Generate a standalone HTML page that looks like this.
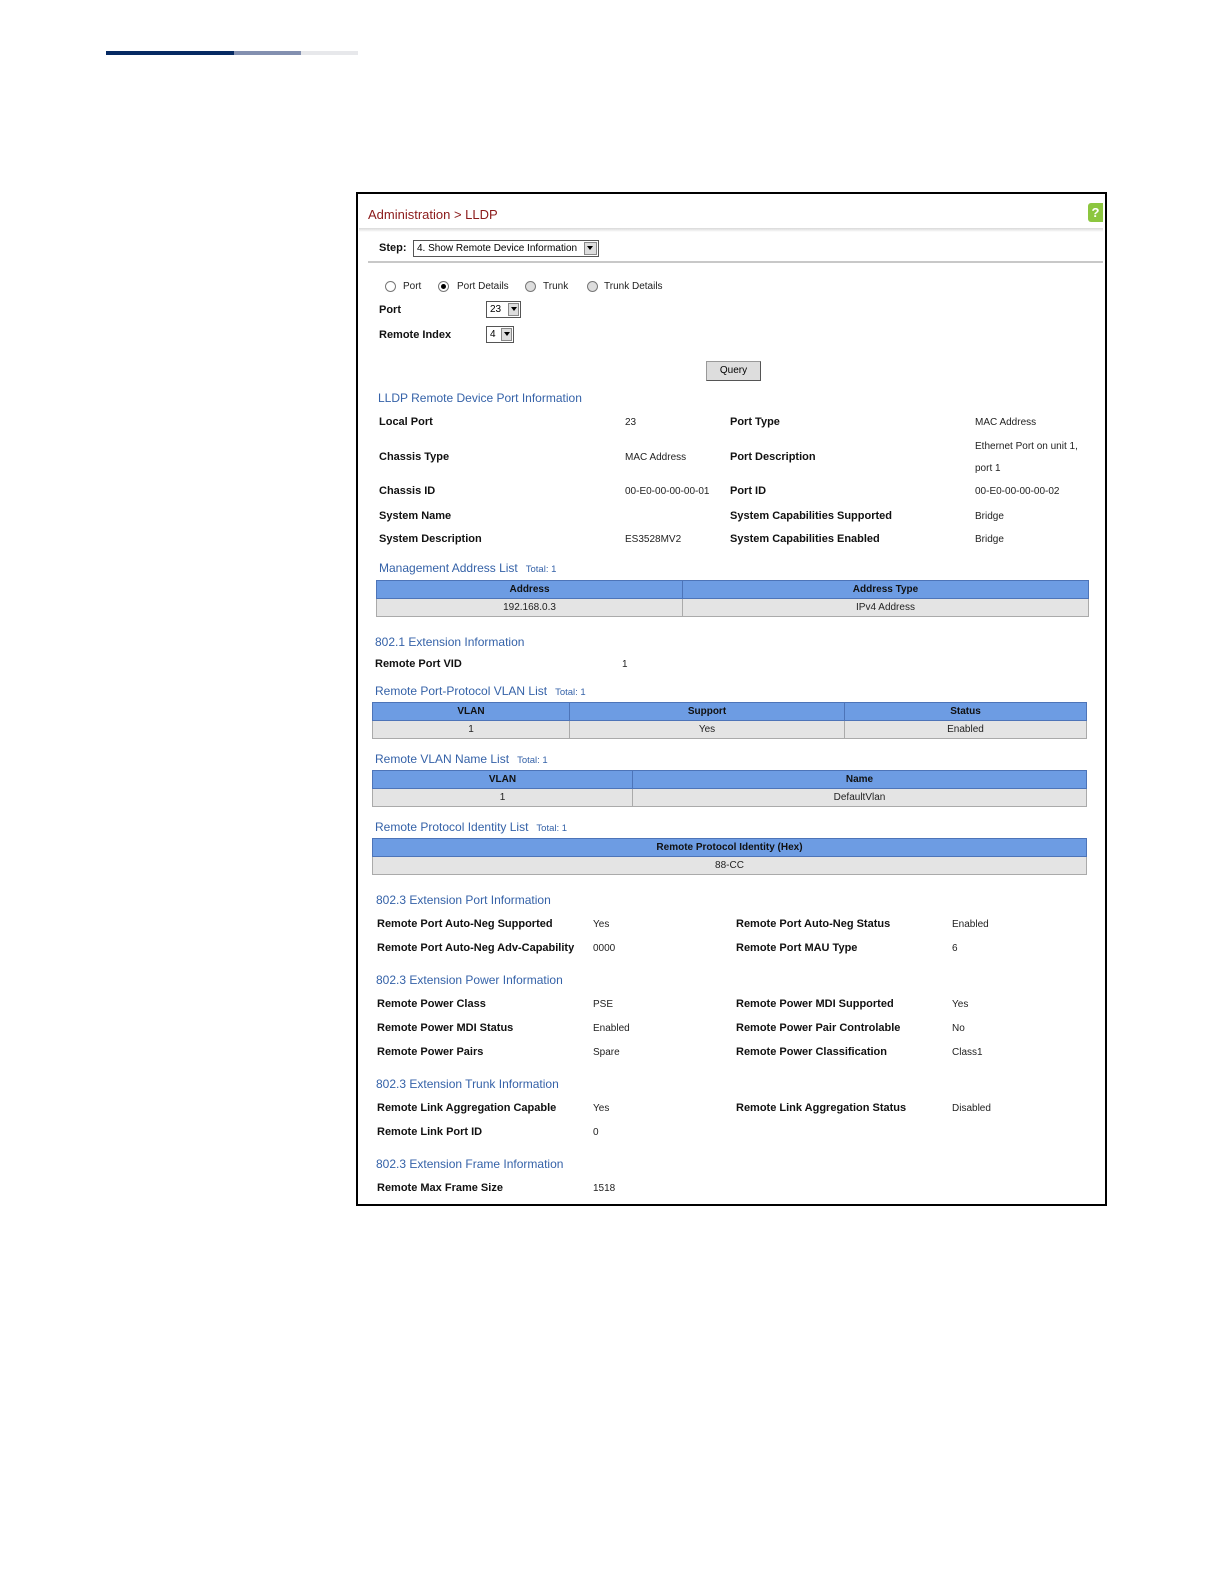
<!DOCTYPE html>
<html><head><meta charset="utf-8"><style>
body{margin:0;width:1224px;height:1584px;background:#fff;position:relative;font-family:"Liberation Sans",sans-serif;overflow:hidden}
div{position:absolute}
.t{font-size:11px;line-height:14px;white-space:nowrap;color:#111}
.b{font-weight:bold}
.v{font-size:10px;color:#222;padding-top:1px}
.h{font-size:12px;color:#3562a8;font-weight:normal;white-space:nowrap;line-height:14px}
.h small{font-size:9.5px;margin-left:8px}
table{position:absolute;border-collapse:collapse;font-size:10px}
th{background:#6d9ce3;border:1px solid #4d74b8;color:#111;font-weight:bold;height:17px;padding:0}
td{background:#e4e4e4;border:1px solid #aaa;text-align:center;height:17px;padding:0;color:#222}
.sel{border:1px solid #555;background:#fff;height:15px;font-size:10px;line-height:15px;padding-left:3px;box-sizing:border-box}
.arr{position:absolute;right:1px;top:1px;width:11px;height:11px;background:#ddd;border:1px solid #888;box-sizing:border-box}
.arr:after{content:"";position:absolute;left:2px;top:3px;border-left:3px solid transparent;border-right:3px solid transparent;border-top:4px solid #000}
.rad{width:9px;height:9px;border:1px solid #777;border-radius:50%;background:#fff}
</style></head><body>
<div style="left:106px;top:51px;width:128px;height:4px;background:#062a63"></div>
<div style="left:234px;top:51px;width:67px;height:4px;background:#8390b0"></div>
<div style="left:301px;top:51px;width:57px;height:4px;background:#e7e8eb"></div>

<div style="left:356px;top:192px;width:747px;height:1010px;border:2px solid #000;background:#fff"></div>
<div style="left:359px;top:228px;width:744px;height:4px;background:linear-gradient(#d8d8d8,#fff)"></div>
<div style="left:368px;top:207px;font-size:13px;color:#8b1a1a;line-height:16px">Administration &gt; LLDP</div>
<div style="left:1088px;top:203px;width:15px;height:19px;background:#8cc63f;border-radius:3px 0 0 3px;color:#fff;font-weight:bold;font-size:13px;text-align:center;line-height:19px">?</div>
<div class="t b" style="left:379px;top:241px">Step:</div>
<div class="sel" style="left:413px;top:240px;width:186px;height:17px;line-height:15px">4. Show Remote Device Information<span class="arr" style="width:13px;height:13px"></span></div>
<div style="left:368px;top:261px;width:735px;height:2px;background:#c8c8c8"></div>

<div class="rad" style="left:385px;top:281px"></div><div class="t v" style="left:403px;top:279px">Port</div>
<div class="rad" style="left:438px;top:281px"><div style="left:2px;top:2px;width:5px;height:5px;border-radius:50%;background:#000"></div></div><div class="t v" style="left:457px;top:279px">Port Details</div>
<div class="rad" style="left:525px;top:281px;background:#ddd"></div><div class="t v" style="left:543px;top:279px">Trunk</div>
<div class="rad" style="left:587px;top:281px;background:#ddd"></div><div class="t v" style="left:604px;top:279px">Trunk Details</div>
<div class="t b" style="left:379px;top:303px">Port</div>
<div class="sel" style="left:486px;top:301px;width:35px;height:17px">23<span class="arr" style="height:13px"></span></div>
<div class="t b" style="left:379px;top:328px">Remote Index</div>
<div class="sel" style="left:486px;top:326px;width:28px;height:17px">4<span class="arr" style="height:13px"></span></div>
<div style="left:706px;top:361px;width:55px;height:20px;background:#ddd;border:1px solid #999;border-right-color:#555;border-bottom-color:#555;box-sizing:border-box;font-size:10px;text-align:center;line-height:18px">Query</div>

<div class="h" style="left:378px;top:391px">LLDP Remote Device Port Information</div>
<div class="t b" style="left:379px;top:415px">Local Port</div><div class="t v" style="left:625px;top:415px">23</div><div class="t b" style="left:730px;top:415px">Port Type</div><div class="t v" style="left:975px;top:415px">MAC Address</div>
<div class="t b" style="left:379px;top:450px">Chassis Type</div><div class="t v" style="left:625px;top:450px">MAC Address</div><div class="t b" style="left:730px;top:450px">Port Description</div><div class="t v" style="left:975px;top:439px">Ethernet Port on unit 1,</div><div class="t v" style="left:975px;top:461px">port 1</div>
<div class="t b" style="left:379px;top:484px">Chassis ID</div><div class="t v" style="left:625px;top:484px">00-E0-00-00-00-01</div><div class="t b" style="left:730px;top:484px">Port ID</div><div class="t v" style="left:975px;top:484px">00-E0-00-00-00-02</div>
<div class="t b" style="left:379px;top:509px">System Name</div><div class="t b" style="left:730px;top:509px">System Capabilities Supported</div><div class="t v" style="left:975px;top:509px">Bridge</div>
<div class="t b" style="left:379px;top:532px">System Description</div><div class="t v" style="left:625px;top:532px">ES3528MV2</div><div class="t b" style="left:730px;top:532px">System Capabilities Enabled</div><div class="t v" style="left:975px;top:532px">Bridge</div>

<div class="h" style="left:379px;top:561px">Management Address List<small>Total: 1</small></div>
<table style="left:376px;top:580px;width:713px"><tr><th style="width:305px">Address</th><th>Address Type</th></tr><tr><td>192.168.0.3</td><td>IPv4 Address</td></tr></table>

<div class="h" style="left:375px;top:635px">802.1 Extension Information</div>
<div class="t b" style="left:375px;top:657px">Remote Port VID</div><div class="t v" style="left:622px;top:657px">1</div>
<div class="h" style="left:375px;top:684px">Remote Port-Protocol VLAN List<small>Total: 1</small></div>
<table style="left:372px;top:702px;width:715px"><tr><th style="width:196px">VLAN</th><th style="width:274px">Support</th><th>Status</th></tr><tr><td>1</td><td>Yes</td><td>Enabled</td></tr></table>
<div class="h" style="left:375px;top:752px">Remote VLAN Name List<small>Total: 1</small></div>
<table style="left:372px;top:770px;width:715px"><tr><th style="width:259px">VLAN</th><th>Name</th></tr><tr><td>1</td><td>DefaultVlan</td></tr></table>
<div class="h" style="left:375px;top:820px">Remote Protocol Identity List<small>Total: 1</small></div>
<table style="left:372px;top:838px;width:715px"><tr><th>Remote Protocol Identity (Hex)</th></tr><tr><td>88-CC</td></tr></table>

<div class="h" style="left:376px;top:893px">802.3 Extension Port Information</div>
<div class="t b" style="left:377px;top:917px">Remote Port Auto-Neg Supported</div><div class="t v" style="left:593px;top:917px">Yes</div><div class="t b" style="left:736px;top:917px">Remote Port Auto-Neg Status</div><div class="t v" style="left:952px;top:917px">Enabled</div>
<div class="t b" style="left:377px;top:941px">Remote Port Auto-Neg Adv-Capability</div><div class="t v" style="left:593px;top:941px">0000</div><div class="t b" style="left:736px;top:941px">Remote Port MAU Type</div><div class="t v" style="left:952px;top:941px">6</div>
<div class="h" style="left:376px;top:973px">802.3 Extension Power Information</div>
<div class="t b" style="left:377px;top:997px">Remote Power Class</div><div class="t v" style="left:593px;top:997px">PSE</div><div class="t b" style="left:736px;top:997px">Remote Power MDI Supported</div><div class="t v" style="left:952px;top:997px">Yes</div>
<div class="t b" style="left:377px;top:1021px">Remote Power MDI Status</div><div class="t v" style="left:593px;top:1021px">Enabled</div><div class="t b" style="left:736px;top:1021px">Remote Power Pair Controlable</div><div class="t v" style="left:952px;top:1021px">No</div>
<div class="t b" style="left:377px;top:1045px">Remote Power Pairs</div><div class="t v" style="left:593px;top:1045px">Spare</div><div class="t b" style="left:736px;top:1045px">Remote Power Classification</div><div class="t v" style="left:952px;top:1045px">Class1</div>
<div class="h" style="left:376px;top:1077px">802.3 Extension Trunk Information</div>
<div class="t b" style="left:377px;top:1101px">Remote Link Aggregation Capable</div><div class="t v" style="left:593px;top:1101px">Yes</div><div class="t b" style="left:736px;top:1101px">Remote Link Aggregation Status</div><div class="t v" style="left:952px;top:1101px">Disabled</div>
<div class="t b" style="left:377px;top:1125px">Remote Link Port ID</div><div class="t v" style="left:593px;top:1125px">0</div>
<div class="h" style="left:376px;top:1157px">802.3 Extension Frame Information</div>
<div class="t b" style="left:377px;top:1181px">Remote Max Frame Size</div><div class="t v" style="left:593px;top:1181px">1518</div>
</body></html>
